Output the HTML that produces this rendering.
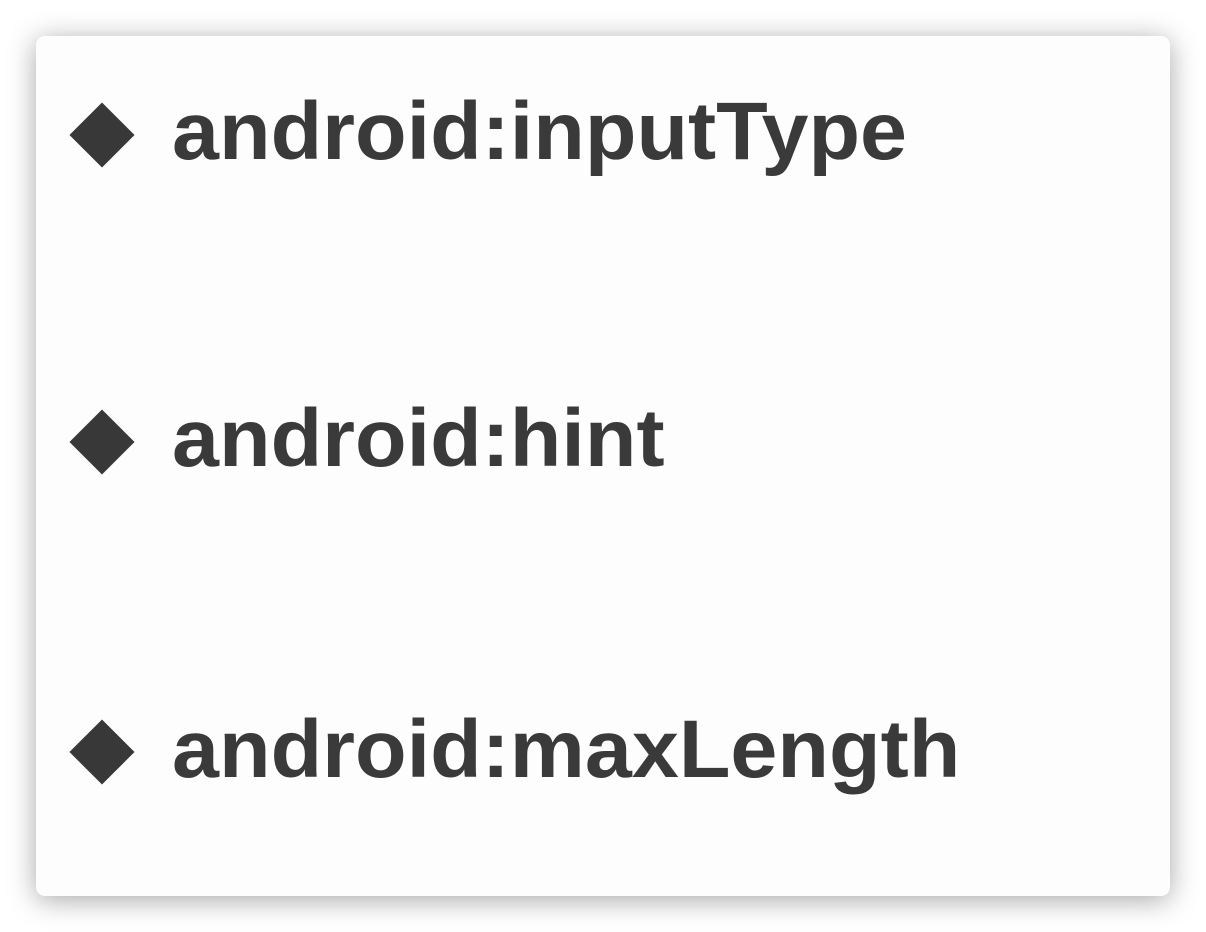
<!DOCTYPE html>
<html><head><style>
html,body{margin:0;padding:0;width:1206px;height:932px;background:#fff;overflow:hidden}
.card{position:absolute;left:36px;top:36px;width:1134px;height:860px;background:#fdfdfd;border-radius:9px;box-shadow:0 4px 28px rgba(0,0,0,0.35)}
.d{position:absolute;width:46px;height:46px;background:#383838;transform:rotate(45deg)}
.t{position:absolute;left:172px;font-family:"Liberation Sans",sans-serif;font-weight:bold;font-size:82px;color:#3a3a3a;line-height:1;transform:scaleX(1.03);transform-origin:left;white-space:nowrap}
</style></head><body>
<div class="card"></div>
<div class="d" style="left:79px;top:112px"></div>
<div class="d" style="left:79px;top:419px"></div>
<div class="d" style="left:79px;top:729px"></div>
<div class="t" style="top:91px">android:inputType</div>
<div class="t" style="top:398px">android:hint</div>
<div class="t" style="top:709px">android:maxLength</div>
</body></html>
